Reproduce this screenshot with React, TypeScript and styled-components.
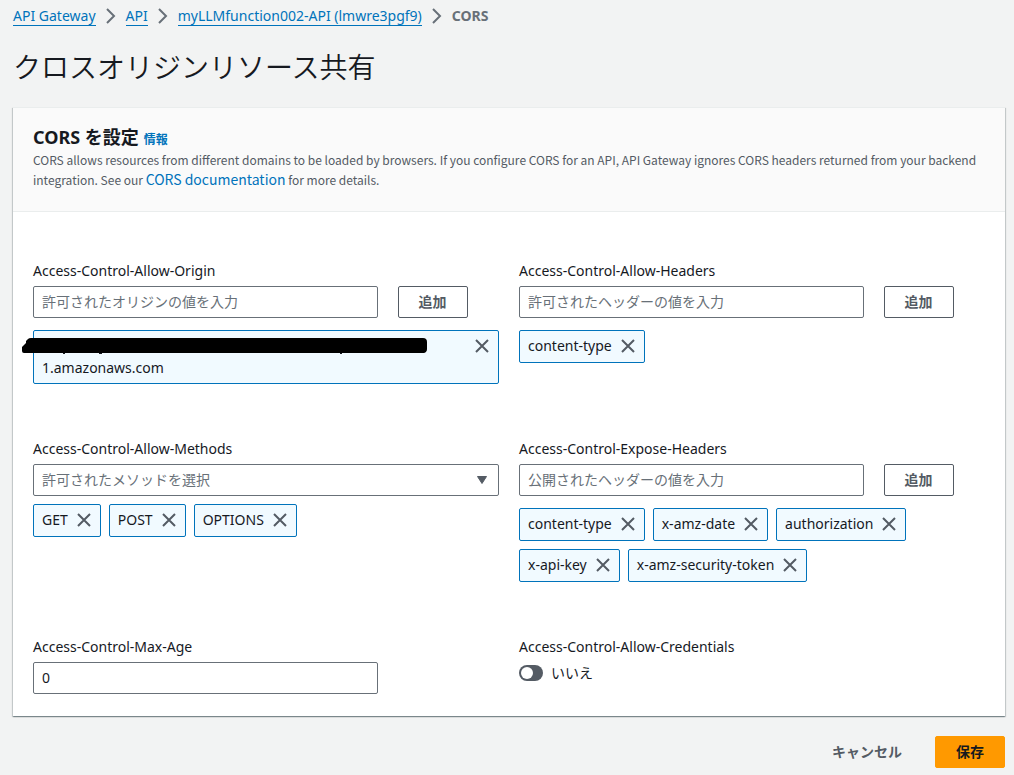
import React, { useState } from "react";
import styled, { createGlobalStyle, css } from "styled-components";

const GlobalStyle = createGlobalStyle`
  *, *::before, *::after { box-sizing: border-box; }
  html { background: #f2f3f3; }
  body {
    margin: 0;
    background: #f2f3f3;
    color: #16191f;
    font-family: "Noto Sans", "Noto Sans CJK JP", sans-serif;
    font-size: 14px;
    line-height: 22px;
  }
  button, input, select { font-family: inherit; margin: 0; }
`;

const Page = styled.main`
  padding: 5px 9px 7px 13px;
`;

const Breadcrumbs = styled.ol`
  display: flex;
  flex-wrap: wrap;
  align-items: center;
  gap: 7px;
  margin: 0;
  padding: 0;
  list-style: none;
`;

const Crumb = styled.li`
  display: flex;
  align-items: center;
  gap: 7px;
  height: 22px;
  color: #687078;

  &[aria-current] { font-weight: 700; }
`;

const Link = styled.a<{ $underlined?: boolean; $large?: boolean }>`
  color: #0073bb;
  text-decoration: none;
  ${(p) => p.$large && css`font-size: 14px; line-height: 16px;`}
  ${(p) =>
    p.$underlined &&
    css`
      line-height: 18px;
      border-bottom: 1px solid #0073bb;
    `}
`;

const PageTitle = styled.h1`
  margin: 22px 0;
  font-size: 28px;
  font-weight: 350;
  line-height: 36px;
`;

const Card = styled.section`
  background: #fff;
  border-top: 1px solid #eaeded;
  box-shadow: 0 1px 1px 0 rgba(0, 28, 36, 0.3), 1px 1px 1px 0 rgba(0, 28, 36, 0.15),
    -1px 1px 1px 0 rgba(0, 28, 36, 0.15);
`;

const CardHeader = styled.header`
  padding: 17px 20px 21px;
  background: #fafafa;
  border-bottom: 1px solid #eaeded;
`;

const CardTitle = styled.h2`
  display: flex;
  align-items: baseline;
  gap: 5px;
  height: 25px;
  margin: 0;
  font-size: 18px;
  line-height: 25px;
`;

const InfoLink = styled(Link)`
  font-size: 12px;
  font-weight: 700;
`;

const Description = styled.p`
  margin: 0;
  color: #545b64;
  font-family: "Noto Sans CJK JP", sans-serif;
  font-size: 12px;
  line-height: 20px;
`;

const FormGrid = styled.div`
  display: grid;
  grid-template-columns: 1fr 1fr;
  gap: 54px 20px;
  padding: 48px 20px 22px;
`;

const Field = styled.div`
  display: flex;
  flex-direction: column;
  align-items: stretch;
  min-width: 0;
`;

const Label = styled.label`
  align-self: flex-start;
  margin-bottom: 4px;
`;

const InputRow = styled.div`
  display: flex;
  gap: 20px;
`;

const control = css`
  height: 32px;
  padding: 0 8px 2px;
  border: 1px solid #687078;
  border-radius: 2px;
  background: #fff;
  color: #16191f;
  font-size: 14px;
`;

const TextInput = styled.input`
  ${control}
  flex: none;
  width: calc(75% - 5px);

  &::placeholder { color: #687078; opacity: 1; }
`;

const SelectBox = styled.div`
  display: grid;
  align-items: center;

  > * { grid-area: 1 / 1; }
  > svg { justify-self: end; margin-right: 11px; pointer-events: none; }
`;

const Select = styled.select`
  ${control}
  width: 100%;
  color: #687078;
  appearance: none;
`;

const Button = styled.button<{ $variant?: "normal" | "link" | "primary" }>`
  height: 32px;
  padding: 0 20px;
  border: 1px solid #545b64;
  border-radius: 2px;
  background: #fff;
  color: #545b64;
  font-size: 14px;
  font-weight: 700;
  line-height: 22px;
  white-space: nowrap;
  cursor: pointer;
  ${(p) => p.$variant === "link" && css`border-color: transparent; background: transparent;`}
  ${(p) =>
    p.$variant === "primary" &&
    css`
      border-color: #ff9900;
      background: #ff9900;
      color: #16191f;
    `}
`;

const TagList = styled.ul<{ $tight?: boolean }>`
  display: flex;
  flex-wrap: wrap;
  gap: 8px;
  margin: ${(p) => (p.$tight ? 8 : 12)}px 0 0;
  padding: 0;
  list-style: none;
`;

const TagItem = styled.li<{ $wide?: boolean }>`
  position: relative;
  display: flex;
  align-items: flex-start;
  justify-content: space-between;
  gap: 8px;
  width: ${(p) => (p.$wide ? "100%" : "auto")};
  min-height: 33px;
  padding: 4px 8px;
  border: 1px solid #0073bb;
  border-radius: 2px;
  background: #f1faff;
`;

const TagText = styled.span<{ $secondLine?: boolean }>`
  padding-top: ${(p) => (p.$secondLine ? 22 : 0)}px;
  overflow-wrap: anywhere;
`;

const RemoveButton = styled.button`
  display: flex;
  align-items: center;
  height: 22px;
  padding: 0;
  border: 0;
  background: none;
  color: #545b64;
  cursor: pointer;
`;

const Redaction = styled.svg`
  position: absolute;
  top: 6px;
  left: -12px;
`;

const ToggleLabel = styled.label`
  display: flex;
  align-items: center;
  gap: 8px;
`;

const Toggle = styled.input`
  appearance: none;
  display: flex;
  align-items: center;
  width: 24px;
  height: 16px;
  padding: 0 2px;
  border-radius: 8px;
  background: #545b64;
  cursor: pointer;

  &::before {
    content: "";
    width: 12px;
    height: 12px;
    border-radius: 50%;
    background: #fff;
  }
  &:checked { justify-content: flex-end; background: #0073bb; }
`;

const Actions = styled.footer`
  display: flex;
  justify-content: flex-end;
  gap: 12px;
  margin-top: 20px;
`;

const Chevron = () => (
  <svg width="16" height="16" viewBox="0 0 16 16" fill="none" stroke="#687078" strokeWidth="2" aria-hidden="true">
    <path d="M4 1l7 7-7 7" />
  </svg>
);

const CloseIcon = () => (
  <svg width="16" height="16" viewBox="0 0 16 16" fill="none" stroke="currentColor" strokeWidth="2" aria-hidden="true">
    <path d="M2 2l12 12M14 2L2 14" />
  </svg>
);

const Caret = () => (
  <svg width="12" height="10" viewBox="0 0 12 10" fill="#545b64" stroke="#545b64" strokeLinejoin="round" aria-hidden="true">
    <path d="M1.5 1.5h9L6 8.5z" />
  </svg>
);

const RedactionStroke = () => (
  <Redaction width="408" height="18" viewBox="0 0 408 18" aria-hidden="true">
    <path d="M6 2Q7 1 9 1H401Q405 1 405 5V12Q405 15 402 16H2Q0 16 0 14V10L4 6V4Z" />
    <path d="M41 16h2v1h-2zM77 16h3v1h-3zM318 16h2v1h-2z" fill="#16191f" />
  </Redaction>
);

function Remove({ name }: { name: string }) {
  return (
    <RemoveButton type="button" aria-label={name}>
      <CloseIcon />
    </RemoveButton>
  );
}

function Tags({ items, tight }: { items: string[]; tight?: boolean }) {
  return (
    <TagList $tight={tight}>
      {items.map((item) => (
        <TagItem key={item}>
          <TagText>{item}</TagText>
          <Remove name={item} />
        </TagItem>
      ))}
    </TagList>
  );
}

function AddField(props: { id: string; label: string; placeholder: string; children: React.ReactNode }) {
  return (
    <Field>
      <Label htmlFor={props.id}>{props.label}</Label>
      <InputRow>
        <TextInput id={props.id} type="text" placeholder={props.placeholder} />
        <Button type="button">追加</Button>
      </InputRow>
      {props.children}
    </Field>
  );
}

export default function App() {
  const [maxAge, setMaxAge] = useState("0");
  const [credentials, setCredentials] = useState(false);

  return (
    <>
      <GlobalStyle />
      <Page>
        <nav>
          <Breadcrumbs>
            {["API Gateway", "API", "myLLMfunction002-API (lmwre3pgf9)"].map((text) => (
              <Crumb key={text}>
                <Link $underlined href="#">{text}</Link>
                <Chevron />
              </Crumb>
            ))}
            <Crumb aria-current="page">CORS</Crumb>
          </Breadcrumbs>
        </nav>
        <PageTitle>クロスオリジンリソース共有</PageTitle>
        <form onSubmit={(e) => e.preventDefault()}>
          <Card>
            <CardHeader>
              <CardTitle>
                CORS を設定 <InfoLink href="#">情報</InfoLink>
              </CardTitle>
              <Description>
                CORS allows resources from different domains to be loaded by browsers. If you configure CORS for an API,
                API Gateway ignores CORS headers returned from your backend integration. See our{" "}
                <Link $large href="#">CORS documentation</Link> for more details.
              </Description>
            </CardHeader>
            <FormGrid>
              <AddField id="origin" label="Access-Control-Allow-Origin" placeholder="許可されたオリジンの値を入力">
                <TagList>
                  <TagItem $wide>
                    <TagText $secondLine>1.amazonaws.com</TagText>
                    <Remove name="1.amazonaws.com" />
                    <RedactionStroke />
                  </TagItem>
                </TagList>
              </AddField>
              <AddField id="headers" label="Access-Control-Allow-Headers" placeholder="許可されたヘッダーの値を入力">
                <Tags items={["content-type"]} />
              </AddField>
              <Field>
                <Label htmlFor="methods">Access-Control-Allow-Methods</Label>
                <SelectBox>
                  <Select id="methods" defaultValue="">
                    <option value="">許可されたメソッドを選択</option>
                  </Select>
                  <Caret />
                </SelectBox>
                <Tags tight items={["GET", "POST", "OPTIONS"]} />
              </Field>
              <AddField id="expose" label="Access-Control-Expose-Headers" placeholder="公開されたヘッダーの値を入力">
                <Tags items={["content-type", "x-amz-date", "authorization", "x-api-key", "x-amz-security-token"]} />
              </AddField>
              <Field>
                <Label htmlFor="max-age">Access-Control-Max-Age</Label>
                <TextInput id="max-age" inputMode="numeric" value={maxAge} onChange={(e) => setMaxAge(e.target.value)} />
              </Field>
              <Field>
                <Label htmlFor="credentials">Access-Control-Allow-Credentials</Label>
                <ToggleLabel>
                  <Toggle
                    id="credentials"
                    type="checkbox"
                    role="switch"
                    checked={credentials}
                    onChange={(e) => setCredentials(e.target.checked)}
                  />
                  {credentials ? "はい" : "いいえ"}
                </ToggleLabel>
              </Field>
            </FormGrid>
          </Card>
          <Actions>
            <Button type="button" $variant="link">キャンセル</Button>
            <Button type="submit" $variant="primary">保存</Button>
          </Actions>
        </form>
      </Page>
    </>
  );
}
